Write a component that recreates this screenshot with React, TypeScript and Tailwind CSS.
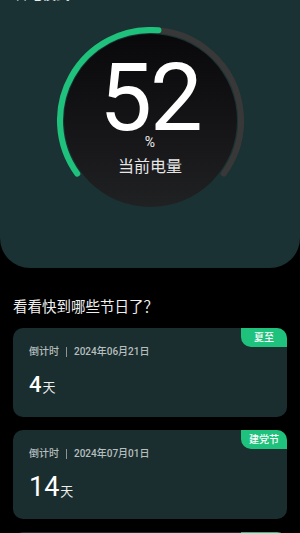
import React from 'react';

const holidays = [
    { name: '夏至', date: '2024年06月21日', days: 4, numClass: 'text-[22px] font-medium' },
    { name: '建党节', date: '2024年07月01日', days: 14, numClass: 'text-[27px]' },
    { name: '七夕节', date: '2024年08月10日', days: 54, numClass: 'text-[27px]' },
];

const BatteryRing = ({ percent }: { percent: number }) => {
    // gauge sweeps 252deg, from -126deg to +126deg (clockwise from top)
    const c = 93.5;
    const r = 90.5;
    const start = -126;
    const sweep = 252;
    const point = (deg: number) => {
        const rad = (deg * Math.PI) / 180;
        return `${(c + r * Math.sin(rad)).toFixed(2)} ${(c - r * Math.cos(rad)).toFixed(2)}`;
    };
    const end = start + (sweep * percent) / 100;
    const large = end - start > 180 ? 1 : 0;

    return (
        <svg className="absolute inset-0" width="187" height="187" viewBox="0 0 187 187" fill="none">
            <path d={`M ${point(start)} A ${r} ${r} 0 1 1 ${point(start + sweep)}`} stroke="#383838" strokeWidth="6" strokeLinecap="round" />
            <path d={`M ${point(start)} A ${r} ${r} 0 ${large} 1 ${point(end)}`} stroke="#1ec27c" strokeWidth="6" strokeLinecap="round" />
        </svg>
    );
};

const App = () => {
    return (
        <div className="min-h-screen bg-black text-white font-[family-name:Roboto,'Noto_Sans_CJK_SC',sans-serif] overflow-hidden">
            {/* Battery panel */}
            <div className="flow-root bg-[#1a3233] rounded-b-[30px] h-[268px]">
                <p className="-mt-[13px] ml-[14px] text-[14px] leading-[14px] text-[#e8eded]">省电模式</p>
                <div className="relative mx-auto mt-[26px] w-[187px] h-[187px] flex items-center justify-center">
                    <BatteryRing percent={52} />
                    <div className="w-[173px] h-[173px] rounded-full bg-linear-to-b from-[#09080a] to-[#202123] flex flex-col items-center pt-[28px]">
                        <span className="text-[94px] leading-[72px] tracking-[-2px] text-white">52</span>
                        <span className="text-[14px] leading-[14px] mt-[1px] text-[#eeeeee]">%</span>
                        <span className="text-[16px] leading-[16px] mt-[10px] text-[#e6e6e6]">当前电量</span>
                    </div>
                </div>
            </div>

            {/* Holidays */}
            <h2 className="mt-[32px] ml-[13px] text-[14.5px] leading-[15px] text-[#f0f0f0]">看看快到哪些节日了？</h2>
            <div className="mt-[13px] mx-[13px] flex flex-col gap-[13px]">
                {holidays.map((h) => (
                    <div key={h.name} className="relative h-[89px] rounded-[10px] bg-[#1a2e30] pl-[16px] pt-[19px]">
                        <div className="absolute top-0 right-0 w-[46px] h-[19px] rounded-tr-[10px] rounded-bl-[10px] bg-[#1ec27c] flex items-center justify-center text-[10px] font-medium text-white">
                            {h.name}
                        </div>
                        <div className="flex items-center text-[10px] leading-[10px] font-medium text-[#b7bebe]">
                            <span>倒计时</span>
                            <span className="mx-[7px] w-px h-[10px] bg-[#8c9494]" />
                            <span>{h.date}</span>
                        </div>
                        <div className="mt-[14px] flex items-baseline leading-[28px]">
                            <span className={h.numClass}>{h.days}</span>
                            <span className="text-[13px] ml-[1px] text-[#eeeeee]">天</span>
                        </div>
                    </div>
                ))}
            </div>
        </div>
    );
};

export default App;
